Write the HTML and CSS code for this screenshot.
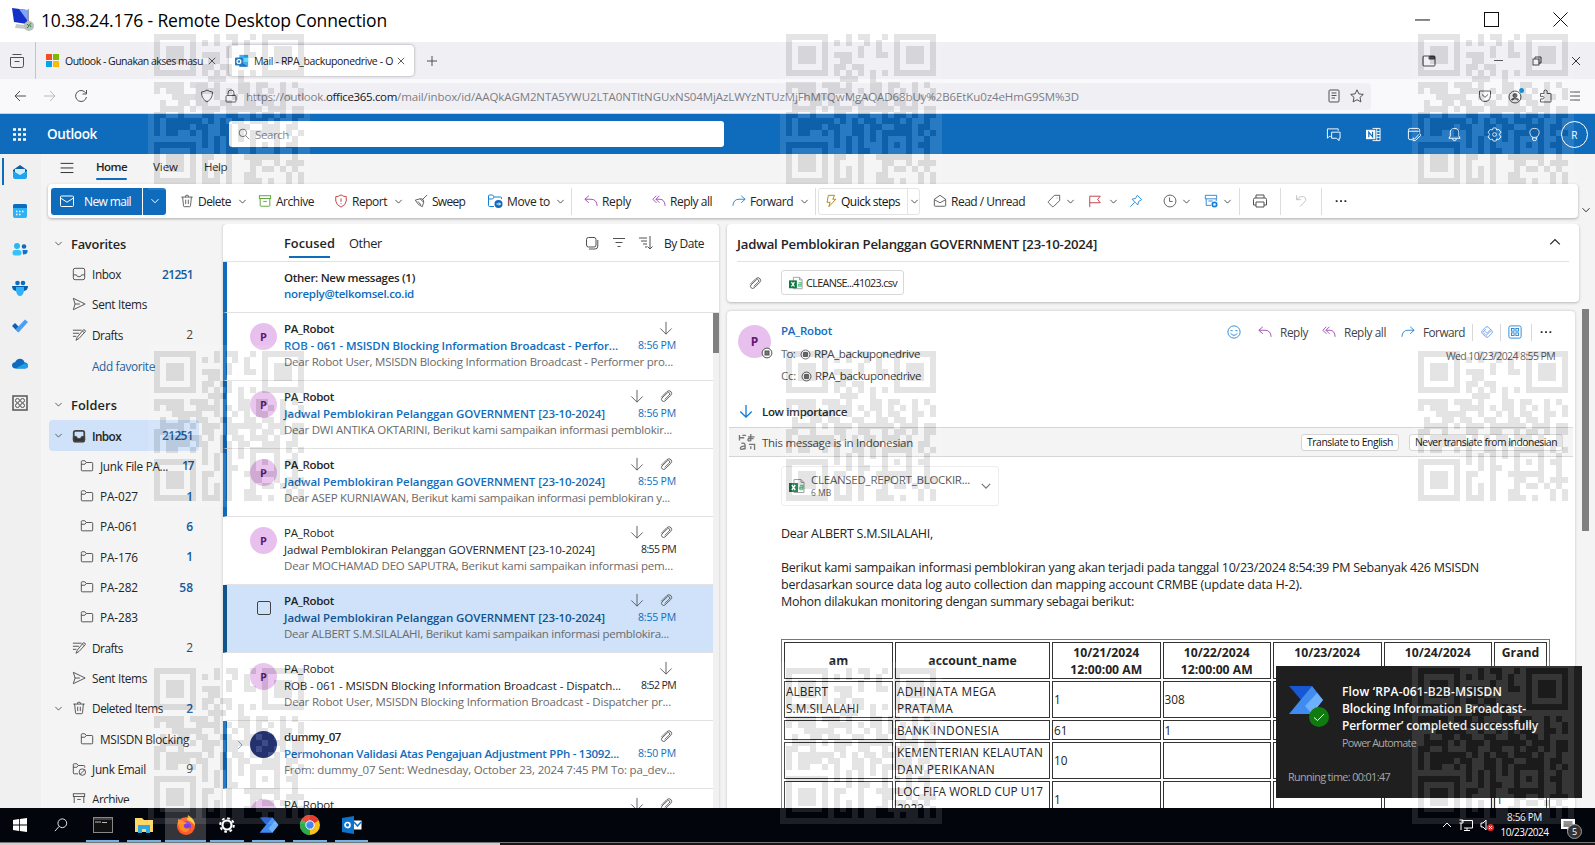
FILE: index.html
```html
<!DOCTYPE html>
<html lang="en">
<head>
<meta charset="utf-8">
<title>10.38.24.176 - Remote Desktop Connection</title>
<link rel="stylesheet" href="styles.css">
</head>
<body>
<svg class="defs" xmlns="http://www.w3.org/2000/svg">
  <symbol id="chev" viewBox="0 0 10 10"><path d="M1.5 3.2 5 6.8 8.5 3.2"/></symbol>
  <symbol id="chevup" viewBox="0 0 10 10"><path d="M1 7 5 3 9 7"/></symbol>
  <symbol id="chevright" viewBox="0 0 10 10"><path d="M3.2 1 7 5 3.2 9"/></symbol>
  <symbol id="x" viewBox="0 0 10 10"><path d="M1 1 9 9M9 1 1 9"/></symbol>
  <symbol id="plus" viewBox="0 0 12 12"><path d="M6 1V11M1 6H11"/></symbol>
  <symbol id="mail" viewBox="0 0 16 16"><rect x="1.5" y="3" width="13" height="10.5" rx="1"/><path d="M1.5 5 8 9.2 14.500 5"/></symbol>
  <symbol id="trash" viewBox="0 0 16 16"><path d="M1.500 3.500H14.500M6 3.300a2 2 0 0 1 4 0M3 3.500 4 13.500q.1 1 1 1H11q.9 0 1-1L13 3.500M6.500 6.500V11.500M9.500 6.500V11.500"/></symbol>
  <symbol id="archive" viewBox="0 0 16 16"><rect x="1.500" y="2" width="13" height="3.200"/><path d="M2.500 5.200V13q0 1 1 1H12.500q1 0 1-1V5.200M6 8.500H10"/></symbol>
  <symbol id="shieldbang" viewBox="0 0 16 16"><path d="M8 1Q10.500 3 14 3V8Q13.500 12.500 8 15 2.500 12.500 2 8V3Q5.500 3 8 1ZM8 5V9M8 10.500V11.500"/></symbol>
  <symbol id="sweep" viewBox="0 0 16 16"><path d="M15 1 9.500 6.500M1.500 7 7 5.500 11 9.500 9.500 14.500Q4.500 13 1.500 7ZM4.500 8.500 8 12.500M7 5.500Q9 5 10.500 6.500 11 8 11 9.500"/></symbol>
  <symbol id="folder" viewBox="0 0 16 16"><path d="M1.500 4V3Q1.500 2 2.500 2H5.500L7.200 4H13.500Q14.500 4 14.500 5V12.500Q14.500 13.500 13.500 13.500H2.500Q1.500 13.500 1.500 12.500V4M1.500 6H5.500L7.200 4"/></symbol>
  <symbol id="moveto" viewBox="0 0 16 16"><path d="M7 13.500H2.500Q1.500 13.500 1.500 12.500V3Q1.500 2 2.500 2H5.500L7.200 4H13.500Q14.500 4 14.500 5V6M1.500 6H5.500L7.200 4"/><circle cx="11.500" cy="11" r="4" fill="#0f6cbd" stroke="none"/><path d="M9.500 11H13.300M12 9.500 13.500 11 12 12.500" stroke="#fff"/></symbol>
  <symbol id="reply" viewBox="0 0 16 16"><path d="M5.500 2 1 6 5.500 10M1 6H8Q14.500 6 15 13.500"/></symbol>
  <symbol id="replyall" viewBox="0 0 16 16"><path d="M8.500 2 4.500 6 8.500 10M4.500 6H9Q14.500 6 15 13.500M5 2 1 6 5 10"/></symbol>
  <symbol id="forward" viewBox="0 0 16 16"><path d="M10.500 2 15 6 10.500 10M15 6H8Q1.500 6 1 13.500"/></symbol>
  <symbol id="bolt" viewBox="0 0 16 16"><path d="M5 1.500H12L10 6H13.500L5.500 14.500 7 9.500H3.500Z"/></symbol>
  <symbol id="openmail" viewBox="0 0 16 16"><path d="M1.500 6 8 1.500 14.500 6V13Q14.500 14 13.500 14H2.500Q1.500 14 1.500 13ZM1.500 6.500 8 10 14.500 6.500"/></symbol>
  <symbol id="tag" viewBox="0 0 16 16"><path d="M8.500 1.500H14.500V7.500L7.500 14.300Q6.800 15 6 14.300L1.700 10Q1 9.300 1.700 8.500ZM11.500 4.300V5"/></symbol>
  <symbol id="flag" viewBox="0 0 16 16"><path d="M2 15V2.500H14L11 6.200 14 10H2"/></symbol>
  <symbol id="pin" viewBox="0 0 16 16"><path d="M9.500 1.500 14.500 6.500 11 8.500 10 12.500 3.500 6 7.500 5ZM6.500 9.500 1.500 14.500"/></symbol>
  <symbol id="clock" viewBox="0 0 16 16"><circle cx="8" cy="8" r="6.800"/><path d="M7.500 4V8.500H11"/></symbol>
  <symbol id="rules" viewBox="0 0 16 16"><path d="M1.500 5.500V1.500H14.500V5.500H1.500M2.500 5.500V13H8M14 5.500V8M5 8H10"/><circle cx="12" cy="12" r="2.500" stroke-width="2"/></symbol>
  <symbol id="print" viewBox="0 0 16 16"><path d="M4 5V2H12V5M4 12H1.500V6.500Q1.500 5 3 5H13Q14.500 5 14.500 6.500V12H12M4 9H12V14H4Z"/></symbol>
  <symbol id="undo" viewBox="0 0 16 16"><path d="M3 1.500V6.500H8M3 6.500Q7 1.500 11 3 15.500 5.500 12 9L7 14.500"/></symbol>
  <symbol id="dots" viewBox="0 0 16 16"><path d="M3 7V9M8 7V9M13 7V9" stroke-width="2"/></symbol>
  <symbol id="clip" viewBox="0 0 16 16"><path d="M2.500 9.500 9 3Q11.500 .8 13.700 3 15.500 5 13.500 7.300L7 13.600Q5.200 15 3.500 13.500 2 11.800 3.500 10.200L9.700 4.300Q11 3.500 12 4.500 12.800 5.700 11.800 6.800L6.500 12"/></symbol>
  <symbol id="down" viewBox="0 0 16 16"><path d="M8 1V15M1.500 8.500 8 15 14.500 8.500"/></symbol>
  <symbol id="inbox" viewBox="0 0 16 16"><rect x="1.500" y="1.500" width="13" height="13" rx="2"/><path d="M1.500 9H5Q5.500 11.200 8 11.200T11 9H14.500"/></symbol>
  <symbol id="inboxfull" viewBox="0 0 16 16"><path d="M1.500 8.500H5Q5.500 11 8 11T11 8.500H14.500V12.500Q14.500 14.500 12.500 14.500H3.500Q1.500 14.500 1.500 12.500Z" fill="#333"/><rect x="2" y="2" width="12" height="12.500" rx="2" stroke-width="2"/></symbol>
  <symbol id="send" viewBox="0 0 16 16"><path d="M1.500 1.500 15 8 1.500 14.500 3.500 8ZM3.500 8H9"/></symbol>
  <symbol id="draft" viewBox="0 0 16 16"><path d="M4.500 14 6 10.500 13 2Q15 1.500 15.300 4L8 12ZM1 2.500H11M1 6H8M1 9.500H5M12 3.500 14 5.500"/></symbol>
  <symbol id="junk" viewBox="0 0 16 16"><path d="M7 13.500H2.500Q1.500 13.500 1.500 12.500V3Q1.500 2 2.500 2H5.500L7.200 4H13.500Q14.500 4 14.500 5V6.500M1.500 6H5.500L7.200 4"/><circle cx="11.800" cy="11.500" r="3.700"/><path d="M9.200 14.200 14.500 8.800"/></symbol>
  <symbol id="search" viewBox="0 0 16 16"><circle cx="6.500" cy="6.500" r="5"/><path d="M10.300 10.300 15 15"/></symbol>
  <symbol id="bigsearch" viewBox="0 0 16 16"><circle cx="9.500" cy="6" r="5"/><path d="M6 9.500 1 15"/></symbol>
  <symbol id="badge" viewBox="0 0 12 12"><circle cx="6" cy="6" r="4.900" fill="#fff"/><rect x="4" y="4" width="4" height="4" fill="#777" stroke-width="1"/></symbol>
  <symbol id="xl" viewBox="0 0 16 16"><path d="M5 1.500H12L15 4.500V14.500H5Z" stroke="#999" fill="#fff"/><path d="M12 1.500V4.500H15" stroke="#999"/><path d="M11 7.500H14V11.500H11V9.500H14" stroke="#5fc98d" stroke-width="1.500"/><rect x="0" y="5" width="9" height="9" fill="#107c41" stroke="none"/><path d="M2.800 7 6.200 12M6.200 7 2.800 12" stroke="#fff" stroke-width="1.400"/></symbol>
  <symbol id="flow" viewBox="0 0 36 30"><path d="M1 1H24L13 15Z" fill="#1857d3" stroke="none"/><path d="M24 1 35 15 24 29H1Z" fill="#3f8bf0" stroke="none"/><path d="M35 15 24 29 17 21 29 8Z" fill="#6db0fb" stroke="none"/></symbol>
  <symbol id="olook" viewBox="0 0 16 16"><rect x="5" y="1" width="10" height="13" fill="#28a8ea" stroke="none"/><path d="M5 8 15 14.500H5Z" fill="#0a5fb4" stroke="none"/><rect x="10" y="4" width="5" height="5" fill="#50d9ff" stroke="none"/><rect x="0" y="4" width="9" height="9" rx="1" fill="#0f6cbd" stroke="none"/><circle cx="4.500" cy="8.500" r="2.200" stroke="#fff" stroke-width="1.400"/></symbol>
</svg>

<div class="desktop">
  <header class="rdp">
    <svg class="rdpico" viewBox="0 0 24 26"><path d="M1 2 16 4V18L3 16Z" fill="#1430c8"/><path d="M8 3 16 4V14Z" fill="#7fa5ff"/><path d="M16 4 18 3V17L16 18Z" fill="#99a"/><path d="M5 18 14 19 15 23 4 22Z" fill="#c4c8cc"/><circle cx="18" cy="20" r="5" fill="#b9c0bb"/><path d="M16 18 18 20 16 22M20 17 18.500 19 20 21" stroke="#2d8a3e" fill="none"/></svg>
    <span class="rdptitle" data-w="346">10.38.24.176 - Remote Desktop Connection</span>
    <div class="winbtns"><svg viewBox="0 0 16 16"><path d="M0 8.500H16"/></svg><svg viewBox="0 0 16 16"><rect x=".5" y=".5" width="15" height="15"/></svg><svg viewBox="0 0 16 16"><path d="M.5 .5 15.500 15.500M15.500 .5 .5 15.500"/></svg></div>
  </header>

  <div class="tabs">
    <div class="tabview"><svg class="i16" viewBox="0 0 16 16"><path d="M3.500 1.500H12.500M1.500 4.500H14.500V12.500Q14.500 14.500 12.500 14.500H3.500Q1.500 14.500 1.500 12.500ZM5.500 8.500H10.500"/></svg></div>
    <div class="tab"><svg class="ms" viewBox="0 0 13 13"><path d="M0 0H6V6H0Z" fill="#f25022"/><path d="M7 0H13V6H7Z" fill="#7fba00"/><path d="M0 7H6V13H0Z" fill="#00a4ef"/><path d="M7 7H13V13H7Z" fill="#ffb900"/></svg><span data-w="138">Outlook - Gunakan akses masu</span><svg class="i8"><use href="#x"/></svg></div>
    <div class="tab active"><svg class="i16"><use href="#olook"/></svg><span data-w="139">Mail - RPA_backuponedrive - O</span><svg class="i8"><use href="#x"/></svg></div>
    <div class="newtab"><svg class="i12"><use href="#plus"/></svg></div>
    <div class="ffwin"><svg class="i14" viewBox="0 0 14 14"><rect x="1" y="2" width="12" height="10" rx="1"/><path d="M7 2.500H12.500V5H7Z" fill="#555"/></svg><svg class="i8 thin" viewBox="0 0 10 10"><path d="M0 5H10"/></svg><svg class="i10" viewBox="0 0 10 10"><rect x="1" y="3" width="6" height="6"/><path d="M3 3V1H9V7H7"/></svg><svg class="i10"><use href="#x"/></svg></div>
  </div>

  <div class="nav">
    <div class="navbtns"><svg class="i14" viewBox="0 0 14 14"><path d="M7 2 2 7 7 12M2 7H13"/></svg><svg class="i14 pale" viewBox="0 0 14 14"><path d="M7 2 12 7 7 12M12 7H1"/></svg><svg class="i14" viewBox="0 0 14 14"><path d="M12 4.500A5.500 5.500 0 1 0 12.500 8M12.500 1V5H8.500"/></svg></div>
    <div class="url">
      <svg class="i14" viewBox="0 0 14 14"><path d="M7 1Q9 2.500 12.500 3 12.500 10 7 13 1.500 10 1.500 3 5 2.500 7 1Z"/></svg>
      <svg class="i14" viewBox="0 0 14 14"><rect x="2" y="6.500" width="10" height="6.500" rx="1"/><path d="M4 6.500V4Q4 1 7 1T10 4V6.500"/></svg>
      <div class="addr"><span data-w="80">https://outlook.</span><span class="dom" data-w="71">office365.com</span><span data-w="682">/mail/inbox/id/AAQkAGM2NTA5YWU2LTA0NTItNGUxNS04MjAzLWYzNTUzMjFhMTQwMgAQAD68bUy%2B6EtKu0z4eHmG9SM%3D</span></div>
      <svg class="i14" viewBox="0 0 14 14"><rect x="2" y="1" width="10" height="12" rx="1"/><path d="M4.500 4H9.500M4.500 6.500H9.500M4.500 9H8"/></svg>
      <svg class="i14" viewBox="0 0 14 14"><path d="M7 .8 8.900 4.900 13.300 5.400 10 8.400 10.900 12.900 7 10.700 3.100 12.900 4 8.400 .7 5.400 5.100 4.900Z"/></svg>
    </div>
    <div class="navright"><svg class="i14" viewBox="0 0 14 14"><path d="M1.500 2H12.500V6.500Q12 12.500 7 12.500T1.500 6.500ZM4 5.500 7 8.300 10 5.500"/></svg><svg class="i16" viewBox="0 0 16 16"><circle cx="7" cy="9" r="6"/><circle cx="7" cy="7.500" r="2" fill="#555"/><path d="M3.500 12Q7 9 10.500 12" stroke-width="2"/><circle cx="13.500" cy="2.500" r="2.500" fill="#1a9fe8" stroke="none"/></svg><svg class="i14" viewBox="0 0 14 14"><path d="M1.500 4.500H5Q4 1 6.500 1T8 4.500H12V13H1.500V10Q5 10.500 5 8.500T1.500 7.500Z"/></svg><svg class="i12" viewBox="0 0 12 12"><path d="M1 2H11M1 6H11M1 10H11"/></svg></div>
  </div>

  <div class="suite">
    <svg class="waffle" viewBox="0 0 13 13"><path d="M0 1.500H3M5 1.500H8M10 1.500H13M0 6.500H3M5 6.500H8M10 6.500H13M0 11.500H3M5 11.500H8M10 11.500H13"/></svg>
    <span class="brand"><span data-w="50">Outlook</span></span>
    <div class="searchbox"><svg class="i12"><use href="#search"/></svg><span data-w="34">Search</span></div>
    <div class="suiteicons">
      <svg viewBox="0 0 16 16"><path d="M5 10H3.500L1.500 12V2H13V4M6 5.500H15V12H14V14.500L11 12H6Z"/></svg>
      <svg viewBox="0 0 16 16"><path d="M7 1.500H15V14.500H7M11.500 1.500V14.500M11.500 5H15M11.500 8H15M11.500 11H15"/><rect x=".5" y="3.500" width="9" height="9" fill="#fff"/><path d="M3 11V5.500L7 10.500V5" stroke="#0f6cbd" stroke-width="1.300"/></svg>
      <svg viewBox="0 0 16 16"><path d="M6 13.500H3.500Q1.500 13.500 1.500 11.500V3.500Q1.500 1.500 3.500 1.500H11.500Q13.500 1.500 13.500 3.500V6M1.500 4.500H13.500M6.500 11.500 8 13 13.500 7 15 8.500 9 14.500H6.500Z"/></svg>
      <svg viewBox="0 0 16 16"><path d="M8 1.500Q12.500 1.500 12.500 6V9.500L14 12H2L3.500 9.500V6Q3.500 1.500 8 1.500ZM6 12.500Q6 14.500 8 14.500T10 12.500"/></svg>
      <svg viewBox="0 0 16 16"><path d="M6.500 1H9.500L10.200 3.200 12.500 2.600 14.800 5.500 13.200 8 14.800 10.500 12.500 13.400 10.200 12.800 9.500 15H6.500L5.800 12.800 3.500 13.400 1.200 10.500 2.800 8 1.200 5.500 3.500 2.600 5.800 3.200Z"/><circle cx="8" cy="8" r="2"/></svg>
      <svg viewBox="0 0 16 16"><path d="M6 11Q3 9 3 6 3 1.500 8 1.500T13 6Q13 9 10 11V13.500Q10 14.500 8 14.500T6 13.500ZM6 11.500H10"/></svg>
      <span class="me">R</span>
    </div>
  </div>

  <div class="app">
    <aside class="rail">
      <div class="ri sel"><svg viewBox="0 0 16 16"><path d="M1 6 8 1 15 6V9H1Z" fill="#0f5ea8"/><path d="M3 5H13V10H3Z" fill="#cdeeff"/><path d="M1 7 8 11 15 7V13Q15 15 13 15H3Q1 15 1 13Z" fill="#1fa5ef"/></svg></div>
      <div class="ri"><svg viewBox="0 0 16 16"><rect x="1" y="1" width="14" height="14" rx="2" fill="#2bb3f5"/><path d="M1 5V3Q1 1 3 1H13Q15 1 15 3V5Z" fill="#0f6cbd"/><path d="M4 8.500H12M4 11.500H9" stroke="#fff" stroke-width="1.500" stroke-dasharray="1.500 1.500"/></svg></div>
      <div class="ri"><svg viewBox="0 0 16 16"><circle cx="5" cy="5" r="3" fill="#29b6f6"/><circle cx="12" cy="5.500" r="2.300" fill="#0f6cbd"/><rect x="0.500" y="9" width="9" height="5.500" rx="2.700" fill="#37c2fa"/><path d="M10.500 9H15.500V11Q15 13.500 11 13.500Z" fill="#1173c9"/></svg></div>
      <div class="ri"><svg viewBox="0 0 16 16"><circle cx="5.500" cy="3" r="2.300" fill="#0f6cbd"/><circle cx="11" cy="3" r="2.300" fill="#0f6cbd"/><path d="M0 6H16Q16 11 11 11H5Q0 11 0 6Z" fill="#0b5cad"/><path d="M4 7H12V11Q11 16 8 16T4 11Z" fill="#2fb2f7"/></svg></div>
      <div class="ri"><svg viewBox="0 0 16 16"><path d="M0 8 3 5 8 10 6 14Z" fill="#0f5db4"/><path d="M13 1.500 16 4 6.500 14.500 3.500 11.500Z" fill="#4aa0f5"/></svg></div>
      <div class="ri"><svg viewBox="0 0 18 16"><path d="M4 13Q0 13 0 9.500 0 6.500 3.500 6 5 2 9 2 13 2 14 6 18 6.500 18 10 18 13 14.500 13Z" fill="#0f6cbd"/><path d="M4 13 14 7.500Q18 7 18 10 18 13 14.500 13Z" fill="#1fa0ee"/></svg></div>
      <div class="ri"><svg viewBox="0 0 16 16"><rect x="1" y="1" width="14" height="14" stroke-width="1.500"/><circle cx="5.500" cy="5.500" r="2"/><circle cx="10.500" cy="5.500" r="2"/><circle cx="5.500" cy="10.500" r="2"/><circle cx="10.500" cy="10.500" r="2"/></svg></div>
    </aside>

    <div class="main">
      <div class="rtabs"><svg class="burger" viewBox="0 0 14 12"><path d="M0 1.500H14M0 6.500H14M0 11.500H14"/></svg><span class="on"><b data-w="31">Home</b></span><span><i data-w="25">View</i></span><span><i data-w="23">Help</i></span></div>

      <div class="ribbon">
        <div class="toolbar">
          <div class="newmail"><div class="nm"><svg class="i16"><use href="#mail"/></svg><span data-w="47">New mail</span></div><div class="nmdrop"><svg class="i10"><use href="#chev"/></svg></div></div>
          <div class="t"><svg class="i14"><use href="#trash"/></svg><span data-w="33">Delete</span><svg class="c"><use href="#chev"/></svg></div>
          <div class="t"><svg class="i14 green"><use href="#archive"/></svg><span data-w="38">Archive</span></div>
          <div class="t"><svg class="i14 red"><use href="#shieldbang"/></svg><span data-w="35">Report</span><svg class="c"><use href="#chev"/></svg></div>
          <div class="t"><svg class="i14"><use href="#sweep"/></svg><span data-w="33">Sweep</span></div>
          <div class="t"><svg class="i16 blue"><use href="#moveto"/></svg><span data-w="43">Move to</span><svg class="c tight"><use href="#chev"/></svg></div>
          <div class="sep"></div>
          <div class="t"><svg class="i14 purple"><use href="#reply"/></svg><span data-w="29">Reply</span></div>
          <div class="t"><svg class="i14 purple"><use href="#replyall"/></svg><span data-w="42">Reply all</span></div>
          <div class="t"><svg class="i14 blue"><use href="#forward"/></svg><span data-w="43">Forward</span><svg class="c"><use href="#chev"/></svg></div>
          <div class="sep"></div>
          <div class="quick"><svg class="i14 gold"><use href="#bolt"/></svg><span data-w="59">Quick steps</span><em></em><svg class="c"><use href="#chev"/></svg></div>
          <div class="t"><svg class="i14"><use href="#openmail"/></svg><span data-w="74">Read / Unread</span></div>
          <div class="t"><svg class="i14"><use href="#tag"/></svg><svg class="c near"><use href="#chev"/></svg></div>
          <div class="t"><svg class="i14 red"><use href="#flag"/></svg><svg class="c"><use href="#chev"/></svg></div>
          <div class="t"><svg class="i14 blue"><use href="#pin"/></svg></div>
          <div class="t"><svg class="i14"><use href="#clock"/></svg><svg class="c near"><use href="#chev"/></svg></div>
          <div class="t"><svg class="i14 blue"><use href="#rules"/></svg><svg class="c near"><use href="#chev"/></svg></div>
          <div class="sep"></div>
          <div class="t"><svg class="i16"><use href="#print"/></svg></div>
          <div class="sep"></div>
          <div class="t"><svg class="i14 faint"><use href="#undo"/></svg></div>
          <div class="sep"></div>
          <div class="t"><svg class="i14 ink"><use href="#dots"/></svg></div>
        </div>
        <svg class="i10 more"><use href="#chev"/></svg>
      </div>

      <div class="panes">
        <nav class="folders">
          <div class="fh"><svg class="i8"><use href="#chev"/></svg><b data-w="55">Favorites</b></div>
          <div class="f"><svg class="i14"><use href="#inbox"/></svg><span data-w="29">Inbox</span><b data-w="31">21251</b></div>
          <div class="f"><svg class="i14"><use href="#send"/></svg><span data-w="55">Sent Items</span></div>
          <div class="f"><svg class="i14"><use href="#draft"/></svg><span data-w="31">Drafts</span><u>2</u></div>
          <div class="f add"><span data-w="63">Add favorite</span></div>
          <div class="fh second"><svg class="i8"><use href="#chev"/></svg><b data-w="46">Folders</b></div>
          <div class="f sel"><svg class="i8 tw"><use href="#chev"/></svg><svg class="i14"><use href="#inboxfull"/></svg><span data-w="29">Inbox</span><b data-w="31">21251</b></div>
          <div class="f sub"><svg class="i14"><use href="#folder"/></svg><span data-w="68">Junk File PA...</span><b data-w="11">17</b></div>
          <div class="f sub"><svg class="i14"><use href="#folder"/></svg><span data-w="38">PA-027</span><b>1</b></div>
          <div class="f sub"><svg class="i14"><use href="#folder"/></svg><span data-w="38">PA-061</span><b>6</b></div>
          <div class="f sub"><svg class="i14"><use href="#folder"/></svg><span data-w="38">PA-176</span><b>1</b></div>
          <div class="f sub"><svg class="i14"><use href="#folder"/></svg><span data-w="38">PA-282</span><b>58</b></div>
          <div class="f sub"><svg class="i14"><use href="#folder"/></svg><span data-w="38">PA-283</span></div>
          <div class="f"><svg class="i14"><use href="#draft"/></svg><span data-w="31">Drafts</span><u>2</u></div>
          <div class="f"><svg class="i14"><use href="#send"/></svg><span data-w="55">Sent Items</span></div>
          <div class="f twist"><svg class="i8 tw"><use href="#chev"/></svg><svg class="i14"><use href="#trash"/></svg><span data-w="71">Deleted Items</span><b>2</b></div>
          <div class="f sub"><svg class="i14"><use href="#folder"/></svg><span data-w="89">MSISDN Blocking</span></div>
          <div class="f"><svg class="i14"><use href="#junk"/></svg><span data-w="54">Junk Email</span><u>9</u></div>
          <div class="f"><svg class="i14"><use href="#archive"/></svg><span data-w="37">Archive</span></div>
        </nav>

        <section class="list">
          <div class="lh">
            <span class="on"><b data-w="51">Focused</b></span><span><i data-w="33">Other</i></span>
            <div class="lhr"><svg class="i14" viewBox="0 0 14 14"><rect x="1.500" y="1.500" width="9.500" height="9.500" rx="2"/><path d="M4 13H10Q12.800 13 12.800 10V4"/></svg><svg class="i14" viewBox="0 0 14 14"><path d="M1 2.500H13M3.500 6.500H10.500M5.500 10.500H8.500"/></svg><svg class="i14" viewBox="0 0 14 14"><path d="M0 2H8M2 5H8M4 8H8M6 11H8M11 0V13M8.500 10.500 11 13 13.500 10.500"/></svg><i data-w="40">By Date</i></div>
          </div>
          <div class="om"><b data-w="131">Other: New messages (1)</b><b class="lnk" data-w="130">noreply@telkomsel.co.id</b></div>
          <div class="m un"><span class="av">P</span><div class="tx"><b data-w="50">PA_Robot</b><strong data-w="334">ROB - 061 - MSISDN Blocking Information Broadcast - Perfor...</strong><i data-w="389">Dear Robot User, MSISDN Blocking Information Broadcast - Performer pro...</i></div><div class="ic"><svg class="i14"><use href="#down"/></svg></div><time data-w="38">8:56 PM</time></div>
          <div class="m un"><span class="av">P</span><div class="tx"><b data-w="50">PA_Robot</b><strong data-w="321">Jadwal Pemblokiran Pelanggan GOVERNMENT [23-10-2024]</strong><i data-w="388">Dear DWI ANTIKA OKTARINI, Berikut kami sampaikan informasi pemblokir...</i></div><div class="ic"><svg class="i14"><use href="#down"/></svg><svg class="i14"><use href="#clip"/></svg></div><time data-w="38">8:56 PM</time></div>
          <div class="m un"><span class="av">P</span><div class="tx"><b data-w="50">PA_Robot</b><strong data-w="321">Jadwal Pemblokiran Pelanggan GOVERNMENT [23-10-2024]</strong><i data-w="386">Dear ASEP KURNIAWAN, Berikut kami sampaikan informasi pemblokiran y...</i></div><div class="ic"><svg class="i14"><use href="#down"/></svg><svg class="i14"><use href="#clip"/></svg></div><time data-w="38">8:55 PM</time></div>
          <div class="m"><span class="av">P</span><div class="tx"><b data-w="50">PA_Robot</b><strong data-w="311">Jadwal Pemblokiran Pelanggan GOVERNMENT [23-10-2024]</strong><i data-w="389">Dear MOCHAMAD DEO SAPUTRA, Berikut kami sampaikan informasi pem...</i></div><div class="ic"><svg class="i14"><use href="#down"/></svg><svg class="i14"><use href="#clip"/></svg></div><time data-w="35">8:55 PM</time></div>
          <div class="m un cur"><span class="box"></span><div class="tx"><b data-w="50">PA_Robot</b><strong data-w="321">Jadwal Pemblokiran Pelanggan GOVERNMENT [23-10-2024]</strong><i data-w="385">Dear ALBERT S.M.SILALAHI, Berikut kami sampaikan informasi pemblokira...</i></div><div class="ic"><svg class="i14"><use href="#down"/></svg><svg class="i14"><use href="#clip"/></svg></div><time data-w="38">8:55 PM</time></div>
          <div class="m"><span class="av">P</span><div class="tx"><b data-w="50">PA_Robot</b><strong data-w="337">ROB - 061 - MSISDN Blocking Information Broadcast - Dispatch...</strong><i data-w="387">Dear Robot User, MSISDN Blocking Information Broadcast - Dispatcher pr...</i></div><div class="ic"><svg class="i14"><use href="#down"/></svg></div><time data-w="35">8:52 PM</time></div>
          <div class="m un thread"><svg class="i10 exp"><use href="#chevright"/></svg><span class="av navy"></span><div class="tx"><b data-w="57">dummy_07</b><strong data-w="335">Permohonan Validasi Atas Pengajuan Adjustment PPh - 13092...</strong><i data-w="391">From: dummy_07 Sent: Wednesday, October 23, 2024 7:45 PM To: pa_dev...</i></div><div class="ic"><svg class="i14"><use href="#clip"/></svg></div><time data-w="38">8:50 PM</time></div>
          <div class="m"><span class="av">P</span><div class="tx"><b data-w="50">PA_Robot</b></div><div class="ic"><svg class="i14"><use href="#down"/></svg><svg class="i14"><use href="#clip"/></svg></div></div>
          <div class="track"><div></div></div>
        </section>

        <section class="reading">
          <div class="subject">
            <div class="sj"><b data-w="360">Jadwal Pemblokiran Pelanggan GOVERNMENT [23-10-2024]</b><svg class="i12"><use href="#chevup"/></svg></div>
            <div class="at"><svg class="i14"><use href="#clip"/></svg><span class="chip"><svg class="i14"><use href="#xl"/></svg><i data-w="91">CLEANSE...41023.csv</i></span></div>
          </div>
          <div class="body">
            <article class="msg">
              <div class="mh">
                <div class="bigav">P<svg class="i12"><use href="#badge"/></svg></div>
                <div class="who"><b data-w="51">PA_Robot</b><p><i data-w="14">To:</i><svg class="i12"><use href="#badge"/></svg><i class="dk" data-w="106">RPA_backuponedrive</i></p><p><i data-w="15">Cc:</i><svg class="i12"><use href="#badge"/></svg><i class="dk" data-w="106">RPA_backuponedrive</i></p></div>
                <div class="acts">
                  <div class="arow">
                    <div><svg class="i14 blue" viewBox="0 0 16 16"><circle cx="8" cy="8" r="7"/><path d="M4 6.500H6.500M9.500 6.500H12M4 9.500Q8 14 12 9.500"/></svg></div>
                    <div><svg class="i14 purple"><use href="#reply"/></svg><i data-w="28">Reply</i></div>
                    <div><svg class="i14 purple"><use href="#replyall"/></svg><i data-w="42">Reply all</i></div>
                    <div><svg class="i14 blue"><use href="#forward"/></svg><i data-w="42">Forward</i></div>
                    <div class="bar"><svg class="i14 sky" viewBox="0 0 16 16"><rect x="3" y="3" width="10" height="10" rx="2.500" transform="rotate(45 8 8)"/><path d="M3.500 8.500 7 12 12.500 6.500M3.500 8 7 4.500M5 6.500 8 9.500 12.500 5"/></svg></div>
                    <div class="bar"><svg class="i14 blue" viewBox="0 0 16 16"><rect x="1" y="1" width="14" height="14" rx="2"/><rect x="4" y="4" width="3" height="3"/><rect x="9" y="4" width="3" height="3"/><rect x="4" y="9" width="3" height="3"/><rect x="9" y="9" width="3" height="3"/></svg></div>
                    <div class="bar"><svg class="i14 ink"><use href="#dots"/></svg></div>
                  </div>
                  <span class="date" data-w="109">Wed 10/23/2024 8:55 PM</span>
                </div>
              </div>
              <div class="low"><svg class="i14"><use href="#down"/></svg><b data-w="85">Low importance</b></div>
              <div class="trans"><svg class="tri" viewBox="0 0 18 18"><path d="M1 1V7M1 4H6M4 1.500H8M3 10Q7 9 7 12V16.500M7 13Q2 12.500 2 15T7 15M10 3H17M13 0V7Q10 8 10 6T16 5M11 11H17V17M13 13V16"/></svg><i data-w="151">This message is in Indonesian</i><span><i data-w="86">Translate to English</i></span><span><i data-w="142">Never translate from Indonesian</i></span></div>
              <div class="file"><svg class="i16"><use href="#xl"/></svg><div><i data-w="159">CLEANSED_REPORT_BLOCKIR...</i><small>6 MB</small></div><svg class="i12"><use href="#chev"/></svg></div>
              <div class="mail">
                <p><i data-w="152">Dear ALBERT S.M.SILALAHI,</i></p><p>&nbsp;</p>
                <p><i data-w="698">Berikut kami sampaikan informasi pemblokiran yang akan terjadi pada tanggal 10/23/2024 8:54:39 PM Sebanyak 426 MSISDN</i></p>
                <p><i data-w="521">berdasarkan source data log auto collection dan mapping account CRMBE (update data H-2).</i></p>
                <p><i data-w="353">Mohon dilakukan monitoring dengan summary sebagai berikut:</i></p>
              </div>
              <table>
                <colgroup><col class="c1"><col class="c2"><col class="c3"><col class="c3"><col class="c3"><col class="c3"><col class="c4"></colgroup>
                <tr class="h"><th>am</th><th>account_name</th><th>10/21/2024<br>12:00:00 AM</th><th>10/22/2024<br>12:00:00 AM</th><th>10/23/2024<br>&nbsp;</th><th>10/24/2024<br>&nbsp;</th><th>Grand<br>&nbsp;</th></tr>
                <tr class="d"><td><i data-w="42">ALBERT</i><br><i data-w="73">S.M.SILALAHI</i></td><td><i data-w="99">ADHINATA MEGA</i><br><i data-w="56">PRATAMA</i></td><td>1</td><td>308</td><td></td><td></td><td></td></tr>
                <tr class="s"><td></td><td><i data-w="102">BANK INDONESIA</i></td><td>61</td><td>1</td><td></td><td></td><td></td></tr>
                <tr class="d"><td></td><td><i data-w="146">KEMENTERIAN KELAUTAN</i><br><i data-w="98">DAN PERIKANAN</i></td><td>10</td><td></td><td></td><td></td><td></td></tr>
                <tr class="d"><td></td><td><i data-w="146">LOC FIFA WORLD CUP U17</i><br>2023</td><td>1</td><td></td><td></td><td></td><td>1</td></tr>
              </table>
            </article>
            <div class="rtrack"><div></div></div>
          </div>
        </section>
      </div>
    </div>
  </div>

  <footer class="taskbar">
    <div><svg class="i14" viewBox="0 0 14 14"><path d="M0 2 6 1V6.600H0ZM6.800 .9 14 0V6.600H6.800ZM0 7.400H6V13L0 12ZM6.800 7.400H14V14L6.800 13.100Z" fill="#fff" stroke="none"/></svg></div>
    <div><svg class="i14 w"><use href="#bigsearch"/></svg></div>
    <div class="run"><svg class="i20" viewBox="0 0 20 18"><rect x=".5" y="1.500" width="19" height="15" fill="#111" stroke="#888"/><path d="M2 6H8M9 6.500H14" stroke="#bbb"/><path d="M1 3H19" stroke="#777"/></svg></div>
    <div class="run"><svg class="i20" viewBox="0 0 20 18"><path d="M1 2H8L10 4H19V16H1Z" fill="#ffd766" stroke="none"/><path d="M4 9H16V17H12V13H8V17H4Z" fill="#2fa8e8" stroke="none"/></svg></div>
    <div class="run hot"><svg class="i20" viewBox="0 0 20 20"><circle cx="10" cy="11" r="9" fill="#ff5a2a" stroke="none"/><path d="M12 0Q19 4 19 11 16 6 11 5Z" fill="#ffc933" stroke="none"/><circle cx="10" cy="11" r="5" fill="#7a3fe0" stroke="none"/><path d="M2 4Q6 6 11 8 7 9 8 12 11 15 14 12 13 18 8 17 1 14 2 4Z" fill="#ff8a1f" stroke="none"/></svg></div>
    <div class="run"><svg class="i16" viewBox="0 0 16 16"><circle cx="8" cy="8" r="4.500" stroke="#fff" stroke-width="2.200"/><circle cx="8" cy="8" r="6.800" stroke="#fff" stroke-width="2" stroke-dasharray="2.670 2.670"/></svg></div>
    <div class="run"><svg class="i20"><use href="#flow"/></svg></div>
    <div class="run"><svg class="i20" viewBox="0 0 20 20"><circle cx="10" cy="10" r="10" fill="#fbc116" stroke="none"/><path d="M10 10 1.300 5A10 10 0 0 1 18.700 5Z" fill="#e33b2e" stroke="none"/><path d="M10 10 10 20A10 10 0 0 1 1.300 5Z" fill="#2da94f" stroke="none"/><path d="M10 5.500H19L10 10Z" fill="#e33b2e" stroke="none"/><circle cx="10" cy="10" r="4.200" fill="#4285f4" stroke="#fff"/></svg></div>
    <div class="run"><svg class="i20" viewBox="0 0 20 18"><rect x="11" y="4.500" width="8.500" height="9" fill="#fff" stroke="none"/><path d="M0 2 12 0V18L0 16Z" fill="#0f72c9" stroke="none"/><path d="M12 6 15.500 10 19 6" stroke="#0f72c9" stroke-width="1.500"/><circle cx="5.500" cy="9" r="2.500" stroke="#fff" stroke-width="1.700"/></svg></div>
    <div class="fill"></div>
    <div><svg class="i10 w"><use href="#chevup"/></svg></div>
    <div><svg class="i14 w" viewBox="0 0 14 14"><path d="M3 4V2.500H13.500V10H5M5 12.500H11M8 10V12.500M.5 2H4V5H.5M2 5V12"/></svg></div>
    <div><svg class="i14 w" viewBox="0 0 14 14"><path d="M1 5H3L6 2V12L3 9H1Z"/><circle cx="10.500" cy="9.500" r="3.500" fill="#e02b2b" stroke="none"/><path d="M9 8 12 11M12 8 9 11"/></svg></div>
    <div class="clk"><i data-w="35">8:56 PM</i><i data-w="48">10/23/2024</i></div>
    <div class="note"><svg class="i14" viewBox="0 0 14 14"><path d="M0 1H14V11H9L6 14V11H0Z" fill="#fff" stroke="none"/><path d="M2.500 4H11.500M2.500 6H11.500M2.500 8H9" stroke="#111"/></svg><span>5</span></div>
  </footer>
  <div class="sliver"></div>

  <aside class="toast">
    <div class="ticon"><svg class="tflow"><use href="#flow"/></svg><svg class="ok" viewBox="0 0 20 20"><circle cx="10" cy="10" r="10" fill="#107c10" stroke="none"/><path d="M5 10.500 8.500 13.500 15 7" stroke="#fff"/></svg></div>
    <div class="ttext"><b data-w="160">Flow ‘RPA-061-B2B-MSISDN</b><b data-w="184">Blocking Information Broadcast-</b><b data-w="196">Performer’ completed successfully</b><i data-w="74">Power Automate</i></div>
    <i class="rt" data-w="102">Running time: 00:01:47</i>
  </aside>
  <div id="marks"></div>
</div>
<script src="app.js"></script>
</body>
</html>
```
FILE: styles.css
```css
*{box-sizing:border-box}
body{margin:0;font-family:"Open Sans","Noto Sans",sans-serif;font-size:12px;color:#242424;background:#fff}
i,u{font-style:normal;text-decoration:none}
p{margin:0}
b{font-weight:600}
.defs{position:absolute;width:0;height:0}
svg{flex:none;fill:none;stroke:#505050;stroke-width:1;display:block;overflow:visible}
[data-w]{display:inline-block;white-space:nowrap}
.i8{width:9px;height:9px}.i10{width:10px;height:10px}.i12{width:12px;height:12px}.i14{width:14px;height:14px}.i16{width:16px;height:16px}.i20{width:20px;height:20px}
.green{stroke:#4f9a2b}.red{stroke:#bc2f32}.blue{stroke:#1b7fd4}.purple{stroke:#9c3fb0}.gold{stroke:#a87d10}.faint{stroke:#bbb}.ink{stroke:#222}.sky{stroke:#6b9bf0}.w{stroke:#fff}
.desktop{position:relative;width:1595px;height:845px;overflow:hidden;display:flex;flex-direction:column}

.rdp{height:42px;flex:none;display:flex;align-items:flex-start;padding:6px 27px 0 11px}
.rdpico{width:24px;height:26px;stroke:none}
.rdptitle{font-size:17.500px;line-height:28px;margin-left:6px;color:#000}
.winbtns{margin-left:auto;display:flex;padding-top:6px;gap:54.500px}
.winbtns svg{width:15px;height:15px;stroke:#000}
.winbtns svg:nth-child(-n+2){margin-left:-1px}

.tabs{height:37px;flex:none;background:#f0f0f4;display:grid;grid-template-columns:36px 193px 185px 1008px 1fr;font-size:10.500px;color:#15141a}
.tabview{border-right:1px solid #c4c4cb;display:flex;align-items:center;padding-left:9px}
.tab{display:flex;align-items:center;padding:0 6px 0 10px;height:31px;margin-top:3px}
.tab .ms{width:13px;height:13px;stroke:none;margin-right:6px}
.tab .i8{margin-left:auto;margin-right:7px;stroke:#333;width:8px;height:8px}
.tab.active{background:#fff;border-radius:4px;box-shadow:0 0 3px rgba(0,0,0,.35);padding-left:6px;padding-right:2px}
.tab.active .i16{width:14px;height:14px;margin-right:5px}
.newtab{display:flex;align-items:center;padding-left:12px}
.ffwin{display:grid;grid-template-columns:72px 38px 39px 20px;align-items:center}
.ffwin svg{stroke:#333}

.nav{height:35px;flex:none;background:#f9f9fb;display:grid;grid-template-columns:195px 1176px 1fr;align-items:center;border-bottom:1px solid #d8d2c8}
.navbtns{display:grid;grid-template-columns:30px 31px 14px;padding-left:13px}
.pale{stroke:#bbb}
.url{height:27px;background:#f0f0f4;border-radius:4px;display:flex;align-items:center;padding:0 7px 0 5px}
.url .i14:nth-child(2){margin-left:10px;margin-right:8px}
.addr{flex:1;display:flex;font-size:11.500px;color:#7c7c84}
.addr .dom{color:#15141a}
.url .i14:last-child{margin-left:9px}
.navright{display:grid;grid-template-columns:30px 31px 30px 12px;padding-left:107px;align-items:center}

.suite{height:40px;flex:none;background:#0f6cbd;display:grid;grid-template-columns:47px 182px 495px 1fr;align-items:center}
.waffle{width:13px;height:13px;margin-left:13px;stroke:#fff;stroke-width:2.500}
.brand{color:#fff;font-size:13.500px;font-weight:600}
.searchbox{height:26px;background:#fff;border-radius:3px;display:flex;align-items:center;gap:5px;padding-left:9px;color:#888;font-size:11.500px}
.suiteicons{display:grid;grid-template-columns:repeat(6,40.300px) 27px;padding-left:602px;justify-content:start;align-items:center}
.suiteicons svg{stroke:#fff;width:15px;height:15px}
.me{width:27px;height:27px;border:1px solid #fff;border-radius:50%;color:#fff;text-align:center;line-height:26px;font-size:10px;margin-left:-7px}

.app{height:654px;flex:none;display:flex;background:#f4f4f4}
.rail{width:41px;background:#f0f0f0;padding-top:4px}
.ri{height:38.300px;display:flex;align-items:center;padding-left:12px}
.ri svg{width:16px;height:16px;stroke:none}
.ri.sel{height:27px;border-left:2px solid #0f6cbd;margin:0 0 7px 2px;padding-left:8px}
.ri:last-child svg{stroke:#555}
.main{flex:1;min-width:0;display:flex;flex-direction:column}
.rtabs{height:30px;display:grid;grid-template-columns:36px 57px 51px 60px;padding-left:19px;align-items:start;font-size:11.500px}
.burger{width:14px;height:11px;margin-top:8px;stroke:#222}
.rtabs span{height:26px;line-height:26px}
.rtabs .on{position:relative}
.rtabs .on::after{content:"";position:absolute;left:0;width:31px;bottom:0;height:2px;background:#0f6cbd;border-radius:2px}
.ribbon{height:40px;display:flex;padding-left:7px}
.toolbar{width:1530px;height:34px;background:#fff;border-radius:4px;box-shadow:0 1px 3px rgba(0,0,0,.3);padding-left:3px;display:grid;grid-template-columns:129px 78px 76px 80px 73px 84px 13px 68px 80px 83px 3px 115px 114px 41px 41px 34px 41px 35px 13px 28px 14px 27px 13px 50px;align-items:center;font-size:12px}
.more{margin:21px 0 0 3px;stroke:#333}
.newmail{display:flex;gap:1px;color:#fff}
.newmail svg{stroke:#fff}
.nm{width:91px;height:27px;background:#0f6cbd;border-radius:3px 0 0 3px;display:flex;align-items:center;padding-left:8px;gap:9px}
.nmdrop{width:23px;height:27px;background:#0f6cbd;border-radius:0 3px 3px 0;display:flex;align-items:center;justify-content:center}
.t{display:flex;align-items:center}
.t span{margin:1px 0 0 4px}
.c{width:9px;height:9px;margin-left:7px;stroke:#444}
.c.tight{margin-left:6px}.c.near{margin-left:5px}
.sep{width:1px;height:27px;background:#ddd}
.quick{width:102px;height:27px;border:1px solid #e4e4e4;border-radius:3px;display:flex;align-items:center;padding-left:5px}
.quick span{margin:1px 0 0 3px;color:#111}
.quick em{width:1px;height:25px;background:#e4e4e4;margin-left:7px}
.quick .c{margin-left:2px}

.panes{flex:1;min-height:0;display:grid;grid-template-columns:182px 496px 8px 868px;overflow:hidden}
.folders{padding:4px 24px 0 8px;height:579px;overflow:hidden}
.fh{height:31px;display:flex;align-items:center;font-size:12.800px;gap:8px;padding-left:5px}
.fh.second{height:39px;padding-top:8px}
.f{height:30.300px;display:flex;align-items:center;padding:0 6px 0 23px;font-size:11.800px}
.f span{margin-left:6px}
.f .i14{stroke:#444}
.f b,.f u{margin-left:auto;font-size:12px}
.f b{color:#155a9c}
.f u{color:#444}
.f.add{padding-left:37px;color:#24609c;height:31.500px}
.f.sub{padding-left:31px}
.f.sel,.f.twist{padding-left:5px}
.f.sel{background:#cfe2f9;border-radius:4px}
.f.sel span{font-weight:600}
.tw{margin-right:9px}

.list{background:#fff;border-radius:4px 4px 0 0;box-shadow:0 0 3px rgba(0,0,0,.22);position:relative;display:flex;flex-direction:column;height:584px;overflow:hidden}
.lh{height:38px;flex:none;border-bottom:1px solid #e2e2e2;display:flex;align-items:center;padding-left:61px;gap:14px;font-size:12.800px}
.lh>span{line-height:39px;padding-top:1px}
.lh .on{position:relative}
.lh .on::after{content:"";position:absolute;left:5px;right:5px;bottom:5px;height:2px;background:#0f6cbd}
.lhr{margin-left:auto;display:flex;gap:13px;align-items:center;padding-right:15px;font-size:12px}
.lhr i{margin:2px 0 0 -2px}
.om{height:51px;flex:none;border-bottom:1px solid #e2e2e2;border-left:4px solid #0f6cbd;padding:8px 0 0 57px;display:flex;flex-direction:column;align-items:flex-start;line-height:16px;font-size:11.500px}
.om .lnk{color:#0f6cbd}
.m{height:68px;flex:none;border-bottom:1px solid #e2e2e2;display:grid;grid-template-columns:23px 34px 1fr;width:490px;border-left:4px solid transparent;position:relative;padding-right:37px}
.m.un{border-left-color:#0f6cbd}
.m.cur{background:#cfe2f9;border-left-color:#0f548c}
.av{grid-column:2;width:27px;height:27px;border-radius:50%;background:#e8c0ee;color:#5f1a72;font-weight:700;font-size:11px;text-align:center;line-height:27px;margin-top:10px}
.navy{background:#28387c}
.exp{grid-column:1;position:absolute;left:8px;top:19px;stroke:#7fa8cf}
.box{grid-column:2;width:14px;height:14px;border:1px solid #444;border-radius:2px;margin:16px 0 0 7px}
.tx{grid-column:3;display:flex;flex-direction:column;align-items:flex-start;line-height:17px;padding-top:7px;font-size:11.500px}
.tx b{font-weight:400}
.tx strong{font-weight:400}
.tx i{color:#6a6a6a;margin-top:-1px}
.un .tx b{font-weight:600}
.un .tx strong{font-weight:600;color:#0f6cbd}
.cur .tx strong{color:#0f548c!important}
.ic{position:absolute;right:40px;top:8px;display:flex;gap:15px}
.m time{position:absolute;right:37px;top:24px;line-height:16px;font-size:10.500px;text-align:right}
.un time{color:#0f6cbd}
.track{position:absolute;right:0;top:89px;bottom:0;width:6px;background:#f1f1f1}
.track div{height:40px;background:#808080}

.reading{grid-column:4;display:flex;flex-direction:column}
.subject{width:852px;height:78px;flex:none;background:#fff;border-radius:4px;box-shadow:0 1px 3px rgba(0,0,0,.25);padding:0 10px;margin-bottom:9px}
.sj{height:38px;border-bottom:1px solid #e2e2e2;display:flex;align-items:center;font-size:13.200px}
.sj b{margin-top:2px}
.sj svg{margin:0 8px 2px auto;stroke:#222}
.at{display:flex;align-items:center;padding:8px 0 0 11px;gap:19px}
.chip{width:123px;height:25px;border:1px solid #d8d8d8;border-radius:3px;display:flex;align-items:center;gap:3px;padding-left:7px;font-size:10.800px}
.body{display:flex;align-items:flex-start}
.msg{width:848px;height:498px;background:#fff;border-radius:4px 4px 0 0;box-shadow:0 0 3px rgba(0,0,0,.22);overflow:hidden}
.rtrack{width:7px;height:499px;margin:-2px 0 0 7px}
.rtrack div{height:222px;background:#808080}
.mh{height:86px;display:flex;padding:0 11px}
.bigav{position:relative;width:33px;height:33px;margin-top:14px;border-radius:50%;background:#e8c0ee;color:#5f1a72;font-weight:700;font-size:12px;text-align:center;line-height:34px}
.bigav svg{position:absolute;right:-2px;bottom:-1px}
.who{margin-left:10px;padding-top:11px;font-size:11.500px;line-height:18px}
.who b{color:#0f6cbd}
.who p{height:22px;display:flex;align-items:center;padding-top:6px;gap:5px;color:#555}
.who p i:last-child{margin-left:-2px}
.who svg{width:11px;height:11px}
.dk{color:#333}
.acts{margin-left:auto;display:flex;flex-direction:column;align-items:flex-end;padding-right:9px}
.arow{margin-top:11px;height:20px;width:328px;display:grid;grid-template-columns:31px 64px 79px 71px 28px 31px 24px;align-items:center;font-size:11.800px;color:#444}
.arow>div{display:flex;align-items:center;gap:8px}
.arow .bar{border-left:1px solid #d8d8d8;height:17px;padding-left:8px}
.arow .bar svg{margin-left:-1px}
.date{font-size:10.500px;color:#555;line-height:16px;margin-top:6px}
.low{height:30px;display:flex;align-items:center;gap:9px;padding:0 0 2px 12px;font-size:11.500px}
.low svg{stroke:#0f7ad8;stroke-width:1.500}
.trans{height:30px;background:#f4f4f4;border:solid #d4d4d4;border-width:1px 0;margin:0 2px;display:flex;align-items:center;padding-left:9px;font-size:11.500px;color:#444}
.tri{width:18px;height:17px;stroke:#777;stroke-width:1.400;margin-right:6px}
.trans span{height:17px;background:#fff;border:1px solid #d4d4d4;border-radius:3px;font-size:10.300px;line-height:15px;color:#111;padding:0 5px;margin-left:10px}
.trans i+span{margin-left:388px}
.file{width:218px;height:40px;margin:9px 0 0 54px;border:1px solid #ededed;border-radius:3px;display:flex;align-items:center;padding-left:7px;gap:6px;font-size:11.500px;color:#555}
.file div{line-height:14px;width:162px}
.file small{display:block;font-size:8.500px;line-height:12px}
.file .i12{margin-left:1px}
.file svg:last-child{stroke:#777}
.mail{margin:19px 0 0 54px;font-size:12.500px;line-height:17px}
.mail p{height:17px}
table{table-layout:fixed;width:769px;margin:29px 0 0 54px;border:1px solid #777;border-spacing:2px;font-size:12.200px;line-height:17px}
.c1{width:109px}.c2{width:155px}.c3{width:108.500px}.c4{width:53px}
th,td{border:1px solid #333;padding:0;text-align:left}
th{text-align:center;font-weight:700}
td{padding-left:1px;font-size:11.800px}
tr.h,tr.d{height:37px}
tr.s{height:20px}

.taskbar{height:34px;flex:none;background:#02050c;display:grid;grid-template-columns:40px 42px 41px 42px 41px 42px 41px 42px 41px 1065px 19px 20px 21px 55px 43px;align-items:stretch;position:relative;z-index:1}
.taskbar>div{display:flex;align-items:center;justify-content:center}
.taskbar .run{box-shadow:inset 0 -2px 0 #76b0e3;margin:0 4px}
.taskbar .hot{margin:0;background:#33353b}
.taskbar .clk{flex-direction:column;color:#fff;font-size:10px;line-height:15px}
.taskbar .note{position:relative;justify-content:flex-start;padding-left:9px}
.note span{position:absolute;left:15px;top:16px;width:15px;height:15px;border-radius:50%;background:#333;border:1px solid #999;color:#fff;font-size:9px;line-height:13px;text-align:center}
.sliver{height:3px;flex:none;background:linear-gradient(#777 1px,transparent 1px),linear-gradient(90deg,#d0cfcd 500px,#1a1513 500px)}

.toast{position:absolute;left:1276px;top:666px;width:306px;height:132px;background:#1f1f1f;color:#fff;padding:17px 12px 0;display:grid;grid-template-columns:54px 1fr;grid-template-rows:85px 20px}
.ticon{position:relative;padding-top:2px}
.tflow{width:36px;height:30px}
.ok{position:absolute;left:21px;top:24px;width:20px;height:20px}
.ttext{display:flex;flex-direction:column;align-items:flex-start;font-size:12px;line-height:17px}
.ttext i,.rt{font-size:10.800px;color:#a8a8a8;line-height:18px}
.rt{grid-column:1/3;justify-self:start}
.mark{position:absolute;width:162px;height:162px;opacity:.1;z-index:5;stroke:none;pointer-events:none}
```
FILE: app.js
```js
// Watermark modules, one string per row
const rows = [
  "1111111000101100101111111",
  "1000001010100101001000001",
  "1011101000001001001011101",
  "1011101011101001101011101",
  "1011101001100000001011101",
  "1000001011011000001000001",
  "1111111010101010101111111",
  "0000000001110010000000000",
  "1111101110100011011001010",
  "1011100111101011010101001",
  "0001111100100101011001101",
  "0100110110011001101101000",
  "0111101011101111110111011",
  "1100100011001100101101011",
  "1011111101010110111010010",
  "1011110110011011001110110",
  "1011001010011010111110101",
  "0000000010101010100010010",
  "1111111010101000101010110",
  "1000001000101100100010010",
  "1011101011001001111110010",
  "1011101010001000110010111",
  "1011101010101000101101010",
  "1000001010101001100000101",
  "1111111011101001110100101"
];
let d = "";
rows.forEach((r, y) => [...r].forEach((c, x) => {
  if (c === "1") d += `M${6 + x * 6} ${6 + y * 6}h6v6h-6z`;
}));
const host = document.getElementById("marks");
for (const top of [28, 345, 662]) {
  for (const left of [148, 780, 1412]) {
    host.insertAdjacentHTML("beforeend",
      `<svg class="mark" style="left:${left}px;top:${top}px" viewBox="0 0 162 162" shape-rendering="crispEdges"><path d="M0 0H162V162H0Z" fill="#fff"/><path d="${d}" fill="#000"/></svg>`);
  }
}
// Track each label to its data-w width
document.querySelectorAll("[data-w]").forEach(el => {
  const w = el.getBoundingClientRect().width;
  el.style.letterSpacing = (el.dataset.w - w) / el.textContent.length + "px";
});
```
